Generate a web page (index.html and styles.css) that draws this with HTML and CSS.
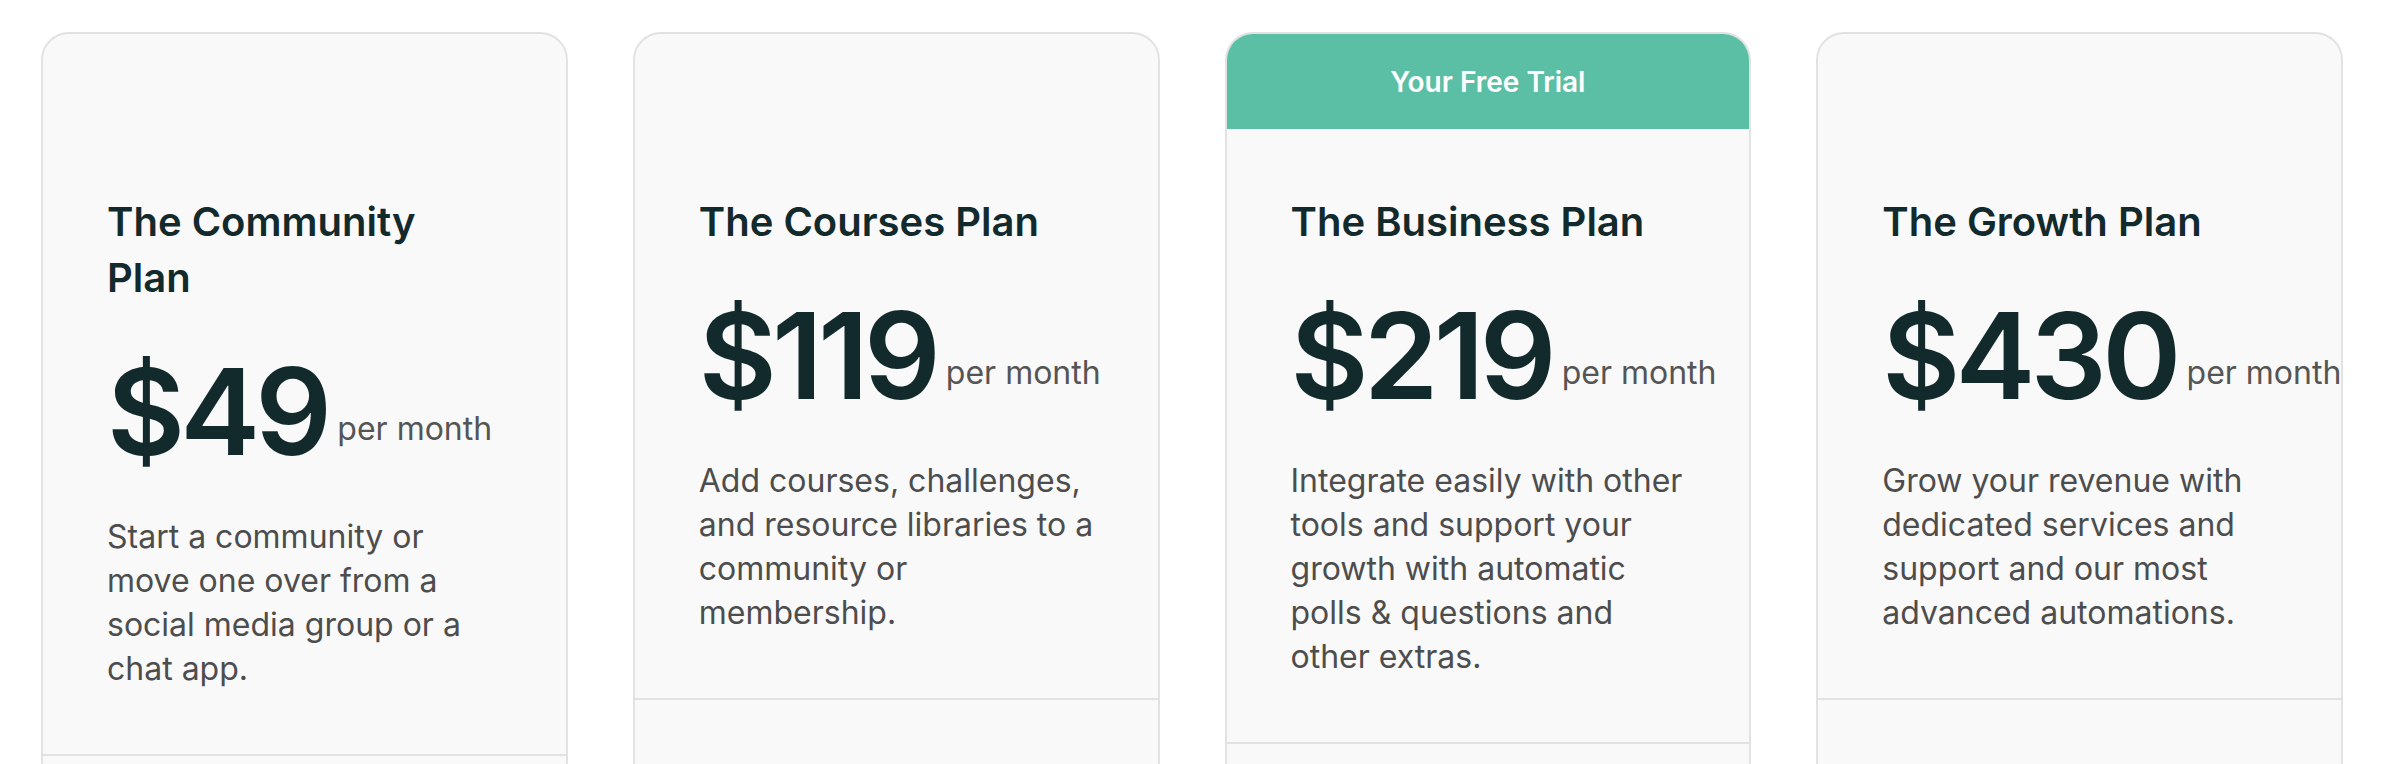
FILE: index.html
```html
<!DOCTYPE html>
<html lang="en">
<head>
<meta charset="utf-8">
<title>Plans</title>
<link rel="stylesheet" href="styles.css">
</head>
<body>
<div class="plans">
  <div class="card">
    <div class="card-head"></div>
    <div class="card-main">
      <h3 class="plan-name">The Community Plan</h3>
      <div class="price-row"><span class="price">$49</span><span class="period">per month</span></div>
      <p class="desc">Start a community or move one over from a social media group or a chat app.</p>
    </div>
    <div class="card-foot"></div>
  </div>
  <div class="card">
    <div class="card-head"></div>
    <div class="card-main">
      <h3 class="plan-name">The Courses Plan</h3>
      <div class="price-row"><span class="price">$119</span><span class="period">per month</span></div>
      <p class="desc">Add courses, challenges, and resource libraries to a community or membership.</p>
    </div>
    <div class="card-foot"></div>
  </div>
  <div class="card">
    <div class="card-head card-head--trial">Your Free Trial</div>
    <div class="card-main">
      <h3 class="plan-name">The Business Plan</h3>
      <div class="price-row"><span class="price">$219</span><span class="period">per month</span></div>
      <p class="desc">Integrate easily with other tools and support your growth with automatic polls &amp; questions and other extras.</p>
    </div>
    <div class="card-foot"></div>
  </div>
  <div class="card">
    <div class="card-head"></div>
    <div class="card-main">
      <h3 class="plan-name">The Growth Plan</h3>
      <div class="price-row"><span class="price">$430</span><span class="period">per month</span></div>
      <p class="desc">Grow your revenue with dedicated services and support and our most advanced automations.</p>
    </div>
    <div class="card-foot"></div>
  </div>
</div>
</body>
</html>
```
FILE: styles.css
```css
* { box-sizing: border-box; }
html, body { margin: 0; padding: 0; background: #ffffff; }
body { font-family: Inter, "Noto Sans", "Liberation Sans", sans-serif; }

.plans {
  display: grid;
  grid-template-columns: repeat(4, 1fr);
  gap: 65px;
  padding: 32px 43px 0 41px;
  width: 2386px;
}

.card {
  display: flex;
  flex-direction: column;
  background: #f9f9f9;
  border: 2px solid #e2e2e2;
  border-radius: 28px;
  overflow: hidden;
  min-height: 900px;
}

.card-head {
  height: 95px;
  display: flex;
  align-items: center;
  justify-content: center;
  font-size: 28px;
  font-weight: 600;
  color: #ffffff;
}
.card-head--trial { background: #5bbfa6; }

.card-main {
  padding: 65px 64px 63px;
}

.plan-name {
  margin: 0;
  font-size: 40px;
  line-height: 56px;
  font-weight: 600;
  color: #132a2d;
}

.price-row {
  display: flex;
  align-items: flex-end;
  gap: 10px;
  margin-top: 46px;
  white-space: nowrap;
}
.price {
  font-size: 120px;
  line-height: 120px;
  font-weight: 600;
  letter-spacing: -0.04em;
  color: #132a2d;
}
.period {
  font-size: 32px;
  line-height: 44px;
  color: #555555;
  margin-bottom: 21px;
}

.desc {
  margin: 43px 0 0;
  font-size: 32px;
  line-height: 44px;
  color: #4d4d4d;
}

.card-foot {
  flex: 1;
  border-top: 2px solid #e2e2e2;
}
```
